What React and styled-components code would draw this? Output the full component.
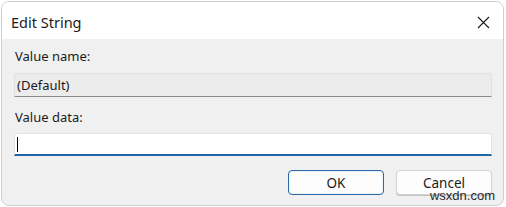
import styled, { createGlobalStyle } from "styled-components"

const Global = createGlobalStyle`
  html, body {
    margin: 0;
    padding: 0;
    background: #ffffff;
  }
  body {
    font-family: "Noto Sans", "Open Sans", sans-serif;
    color: #1b1b1b;
  }
`

const Window = styled.div`
  position: relative;
  box-sizing: border-box;
  margin: 1px 0 0 1px;
  width: 503px;
  height: 205px;
  border: 1px solid #cfcfcf;
  border-radius: 8px;
  overflow: hidden;
  display: flex;
  flex-direction: column;
  background: #f0f0f0;
`

const TitleBar = styled.div`
  height: 37px;
  flex: none;
  background: #ffffff;
  display: flex;
  align-items: center;
  justify-content: space-between;
  padding: 0 13px 0 9px;
`

const Title = styled.div`
  font-size: 14.5px;
  margin-top: 3px;
`

const CloseBtn = styled.div`
  width: 14px;
  height: 14px;
  display: flex;
  align-items: center;
  justify-content: center;
  margin-top: 4px;
`

const Body = styled.div`
  flex: 1;
  display: flex;
  flex-direction: column;
  padding: 9px 11px 0 12px;
`

const Label = styled.div`
  font-size: 13px;
  line-height: 16px;
  margin-bottom: ${p => p.$gap || 7}px;
  padding-left: 1px;
`

const Field = styled.div`
  box-sizing: border-box;
  height: ${p => p.$h}px;
  display: flex;
  align-items: center;
  padding-left: 2px;
  font-size: 13px;
  border-radius: 3px 3px 0 0;
  border: 1px solid ${p => (p.$active ? "#e2e2e2" : "#e0e0e0")};
  border-bottom: ${p => (p.$active ? "2px solid #1e67a6" : "1px solid #8a8a8a")};
  background: ${p => (p.$active ? "#ffffff" : "#ececec")};
  margin-bottom: ${p => p.$mb}px;
`

const Caret = styled.div`
  width: 1px;
  height: 15px;
  background: #000;
`

const Buttons = styled.div`
  display: flex;
  justify-content: flex-end;
  gap: 12px;
`

const Button = styled.div`
  box-sizing: border-box;
  width: 96px;
  height: 25px;
  display: flex;
  align-items: center;
  justify-content: center;
  font-size: 13.5px;
  border-radius: 4px;
  background: #fdfdfd;
  border: 1px solid ${p => (p.$primary ? "#2c6aa8" : "#d3d3d3")};
  box-shadow: ${p => (p.$primary ? "inset 0 0 0 1px #e8f0f8" : "0 1px 0 #c2c2c2")};
`

const Watermark = styled.div`
  position: absolute;
  right: 8px;
  bottom: 3px;
  font-size: 13px;
  line-height: 13px;
  color: #2a2a2a;
  font-family: "Liberation Sans", Arial, sans-serif;
`

const App = () => {
  return (
    <>
      <Global />
      <Window>
        <TitleBar>
          <Title>Edit String</Title>
          <CloseBtn>
            <svg width="13" height="13" viewBox="0 0 13 13">
              <path d="M1 1 L12 12 M12 1 L1 12" stroke="#1b1b1b" strokeWidth="1.1" fill="none" />
            </svg>
          </CloseBtn>
        </TitleBar>
        <Body>
          <Label $gap={9}>Value name:</Label>
          <Field $h={24} $mb={12}>(Default)</Field>
          <Label $gap={8}>Value data:</Label>
          <Field $h={23} $mb={14} $active>
            <Caret />
          </Field>
          <Buttons>
            <Button $primary>OK</Button>
            <Button>Cancel</Button>
          </Buttons>
        </Body>
        <Watermark>wsxdn.com</Watermark>
      </Window>
    </>
  )
}

export default App
